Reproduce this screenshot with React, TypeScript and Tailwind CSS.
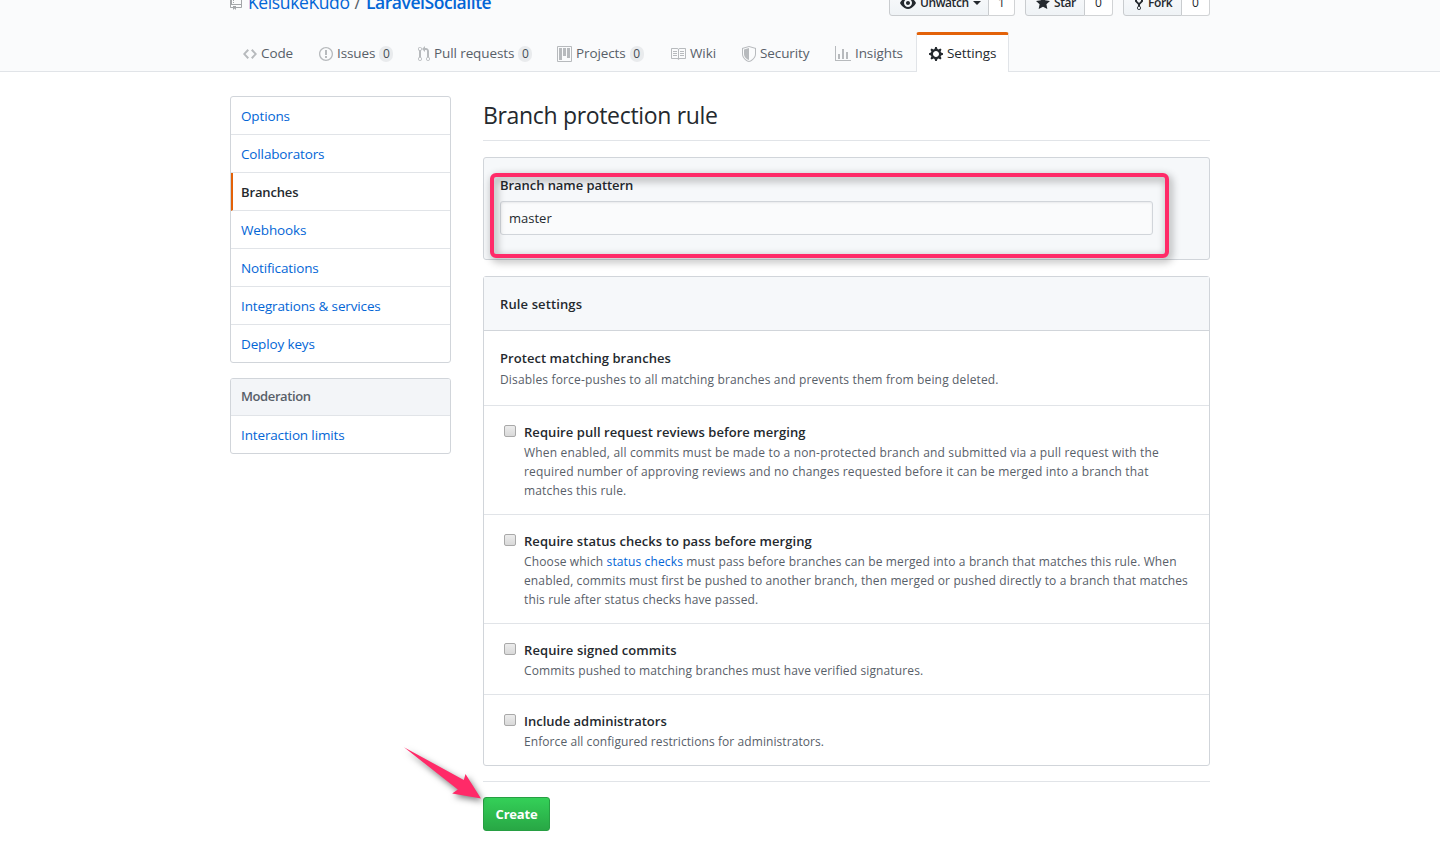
import React from "react";

type IconProps = {
  name: keyof typeof icons;
  className?: string;
};

const icons = {
  repo: {
    width: 12,
    path: "M4 9H3V8h1v1zm0-3H3v1h1V6zm0-2H3v1h1V4zm0-2H3v1h1V2zm8-1v12c0 .55-.45 1-1 1H6v2l-1.5-1.5L3 16v-2H1c-.55 0-1-.45-1-1V1c0-.55.45-1 1-1h10c.55 0 1 .45 1 1zm-1 10H1v2h2v-1h3v1h5v-2zm0-10H2v9h9V1z",
  },
  eye: {
    width: 16,
    path: "M8.06 2C3 2 0 8 0 8s3 6 8.06 6C13 14 16 8 16 8s-3-6-7.94-6zM8 12c-2.2 0-4-1.78-4-4 0-2.2 1.8-4 4-4 2.22 0 4 1.8 4 4 0 2.22-1.78 4-4 4zm2-4c0 1.11-.89 2-2 2-1.11 0-2-.89-2-2 0-1.11.89-2 2-2 1.11 0 2 .89 2 2z",
  },
  star: {
    width: 14,
    path: "M14 6l-4.9-.64L7 1 4.9 5.36 0 6l3.6 3.26L2.67 14 7 11.67 11.33 14l-.93-4.74L14 6z",
  },
  fork: {
    width: 10,
    path: "M8 1a1.993 1.993 0 0 0-1 3.72V6L5 8 3 6V4.72A1.993 1.993 0 0 0 2 1a1.993 1.993 0 0 0-1 3.72V6.5l3 3v1.78A1.993 1.993 0 0 0 5 15a1.993 1.993 0 0 0 1-3.72V9.5l3-3V4.72A1.993 1.993 0 0 0 8 1zM2 4.2C1.34 4.2.8 3.65.8 3c0-.65.55-1.2 1.2-1.2.65 0 1.2.55 1.2 1.2 0 .65-.55 1.2-1.2 1.2zm3 10c-.66 0-1.2-.55-1.2-1.2 0-.65.55-1.2 1.2-1.2.65 0 1.2.55 1.2 1.2 0 .65-.55 1.2-1.2 1.2zm3-10c-.66 0-1.2-.55-1.2-1.2 0-.65.55-1.2 1.2-1.2.65 0 1.2.55 1.2 1.2 0 .65-.55 1.2-1.2 1.2z",
  },
  code: {
    width: 14,
    path: "M9.5 3L8 4.5 11.5 8 8 11.5 9.5 13 14 8 9.5 3zm-5 0L0 8l4.5 5L6 11.5 2.5 8 6 4.5 4.5 3z",
  },
  issue: {
    width: 14,
    path: "M7 2.3c3.14 0 5.7 2.56 5.7 5.7s-2.56 5.7-5.7 5.7A5.71 5.71 0 0 1 1.3 8c0-3.14 2.56-5.7 5.7-5.7zM7 1C3.14 1 0 4.14 0 8s3.14 7 7 7 7-3.14 7-7-3.14-7-7-7zm1 3H6v5h2V4zm0 6H6v2h2v-2z",
  },
  pull: {
    width: 12,
    path: "M11 11.28V5c-.03-.78-.34-1.47-.94-2.06C9.46 2.35 8.78 2.03 8 2H7V0L4 3l3 3V4h1c.27.02.48.11.69.31.21.2.3.42.31.69v6.28A1.993 1.993 0 0 0 10 15a1.993 1.993 0 0 0 1-3.72zm-1 2.92c-.66 0-1.2-.55-1.2-1.2 0-.65.55-1.2 1.2-1.2.65 0 1.2.55 1.2 1.2 0 .65-.55 1.2-1.2 1.2zM4 3c0-1.11-.89-2-2-2a1.993 1.993 0 0 0-1 3.72v6.56A1.993 1.993 0 0 0 2 15a1.993 1.993 0 0 0 1-3.72V4.72c.59-.34 1-.98 1-1.72zm-.8 10c0 .66-.55 1.2-1.2 1.2-.65 0-1.2-.55-1.2-1.2 0-.65.55-1.2 1.2-1.2.65 0 1.2.55 1.2 1.2zM2 4.2C1.34 4.2.8 3.65.8 3c0-.65.55-1.2 1.2-1.2.65 0 1.2.55 1.2 1.2 0 .65-.55 1.2-1.2 1.2z",
  },
  project: {
    width: 15,
    path: "M10 12h3V2h-3v10zm-4-2h3V2H6v8zm-4 4h3V2H2v12zm-1 1h13V1H1v14zM14 0H1a1 1 0 0 0-1 1v14a1 1 0 0 0 1 1h13a1 1 0 0 0 1-1V1a1 1 0 0 0-1-1z",
  },
  book: {
    width: 16,
    path: "M3 5h4v1H3V5zm0 3h4V7H3v1zm0 2h4V9H3v1zm11-5h-4v1h4V5zm0 2h-4v1h4V7zm0 2h-4v1h4V9zm2-6v9c0 .55-.45 1-1 1H9.5l-1 1-1-1H2c-.55 0-1-.45-1-1V3c0-.55.45-1 1-1h5.5l1 1 1-1H15c.55 0 1 .45 1 1zm-8 .5L7.5 3H2v9h6V3.5zm7-.5H9.5l-.5.5V12h6V3z",
  },
  shield: {
    width: 14,
    path: "M0 2l7-2 7 2v6.02C14 12.69 8.69 16 7 16c-1.69 0-7-3.31-7-7.98V2zm1 .75L7 1l6 1.75v5.268C13 12.104 8.449 15 7 15c-1.449 0-6-2.896-6-6.982V2.75zm1 .75L7 2v12c-1.207 0-5-2.482-5-5.985V3.5z",
  },
  graph: {
    width: 16,
    path: "M16 14v1H0V0h1v14h15zM5 13H3V8h2v5zm4 0H7V3h2v10zm4 0h-2V6h2v7z",
  },
  gear: {
    width: 14,
    path: "M14 8.77v-1.6l-1.94-.64-.45-1.09.88-1.84-1.13-1.13-1.81.91-1.09-.45-.69-1.92h-1.6l-.63 1.94-1.11.45-1.84-.88-1.13 1.13.91 1.81-.45 1.09L0 7.23v1.59l1.94.64.45 1.09-.88 1.84 1.13 1.13 1.81-.91 1.09.45.69 1.92h1.59l.63-1.94 1.11-.45 1.84.88 1.13-1.13-.92-1.81.47-1.09L14 8.75v.02zM7 11c-1.66 0-3-1.34-3-3s1.34-3 3-3 3 1.34 3 3-1.34 3-3 3z",
  },
};

const Icon: React.FC<IconProps> = ({ name, className }) => (
  <svg
    width={icons[name].width}
    height={16}
    viewBox={`0 0 ${icons[name].width} 16`}
    fill="currentColor"
    className={`shrink-0 ${className ?? ""}`}
  >
    <path fillRule="evenodd" d={icons[name].path} />
  </svg>
);

type Tab = {
  icon: keyof typeof icons;
  label: string;
  width: string;
  count?: number;
  active?: boolean;
};

const tabs: Tab[] = [
  { icon: "code", label: "Code", width: "w-[76px]" },
  { icon: "issue", label: "Issues", width: "w-[99px]", count: 0 },
  { icon: "pull", label: "Pull requests", width: "w-[139px]", count: 0 },
  { icon: "project", label: "Projects", width: "w-[113px]", count: 0 },
  { icon: "book", label: "Wiki", width: "w-[72px]" },
  { icon: "shield", label: "Security", width: "w-[93px]" },
  { icon: "graph", label: "Insights", width: "w-[94px]" },
  { icon: "gear", label: "Settings", width: "w-[93px]", active: true },
];

const menu = [
  "Options",
  "Collaborators",
  "Branches",
  "Webhooks",
  "Notifications",
  "Integrations & services",
  "Deploy keys",
];

const rules = [
  {
    title: "Require pull request reviews before merging",
    titleClass: "tracking-[0.06px]",
    textClass: "tracking-[0.165px]",
    lines: [
      "When enabled, all commits must be made to a non-protected branch and submitted via a pull request with the",
      "required number of approving reviews and no changes requested before it can be merged into a branch that",
      "matches this rule.",
    ],
  },
  {
    title: "Require status checks to pass before merging",
    titleClass: "tracking-[0.07px]",
    textClass: "tracking-[0.13px]",
    lines: [
      <>
        Choose which <a className="text-[#0366d6]">status checks</a> must pass before branches can be merged into a branch that matches this rule. When
      </>,
      "enabled, commits must first be pushed to another branch, then merged or pushed directly to a branch that matches",
      "this rule after status checks have passed.",
    ],
  },
  {
    title: "Require signed commits",
    titleClass: "tracking-[0.08px]",
    textClass: "tracking-[0.13px]",
    lines: ["Commits pushed to matching branches must have verified signatures."],
  },
  {
    title: "Include administrators",
    titleClass: "tracking-normal",
    textClass: "tracking-[0.08px]",
    lines: ["Enforce all configured restrictions for administrators."],
  },
];

type SocialProps = {
  icon: keyof typeof icons;
  label: string;
  count: number;
  width: string;
  countWidth: string;
  caret?: boolean;
};

const SocialButton: React.FC<SocialProps> = ({ icon, label, count, width, countWidth, caret }) => (
  <div className="flex h-7 text-xs font-semibold text-[#24292e]">
    <button
      className={`${width} flex items-center gap-1 rounded-l-[3px] border border-[#c9cccf] bg-gradient-to-b from-[#fafbfc] to-[#eff3f6] pt-px pl-[10px] tracking-[-0.42px]`}
    >
      <Icon name={icon} />
      {label}
      {caret && <span className="border-x-4 border-t-4 border-x-transparent border-t-[#24292e]" />}
    </button>
    <span
      className={`${countWidth} flex items-center justify-center rounded-r-[3px] border border-l-0 border-[#d1d3d5] bg-white pt-px font-medium`}
    >
      {count}
    </span>
  </div>
);

const Header = () => (
  <div className="h-[72px] overflow-hidden bg-[#fafbfc] shadow-[inset_0_-1px_0_#e1e4e8]">
    <div className="mx-auto -mt-3 flex h-11 w-[980px] items-start justify-between">
      <div className="flex h-7 items-center text-[17.5px] text-[#0366d6]">
        <Icon name="repo" className="mr-[6px] text-[#a3a6a9]" />
        <a className="tracking-[-0.38px]">KeisukeKudo</a>
        <span className="mx-[5px] text-[#586069]">/</span>
        <a className="font-semibold tracking-[-0.45px]">LaravelSocialite</a>
      </div>
      <div className="flex gap-[10px]">
        <SocialButton icon="eye" label="Unwatch" count={1} width="w-[100px]" countWidth="w-[26px]" caret />
        <SocialButton icon="star" label="Star" count={0} width="w-[60px]" countWidth="w-[28px]" />
        <SocialButton icon="fork" label="Fork" count={0} width="w-[59px]" countWidth="w-[28px]" />
      </div>
    </div>
    <nav className="mx-auto flex h-10 w-[980px] text-[13.5px] tracking-[-0.1px]">
      {tabs.map((t) => (
        <a
          key={t.label}
          className={`${t.width} flex items-center gap-1 rounded-t-[3px] border-x border-t-[3px] pl-3 whitespace-nowrap ${
            t.active
              ? "border-x-[#e1e4e8] border-t-[#e36209] bg-white text-[#24292e]"
              : "border-transparent text-[#586069]"
          }`}
        >
          <Icon name={t.icon} className={t.active ? "" : "text-[#b7babd]"} />
          <span className="-mt-px">{t.label}</span>
          {t.count !== undefined && (
            <span className="flex h-4 w-[14px] items-center justify-center rounded-full bg-[#e9ebed] text-xs font-medium tracking-normal text-[#444d56]">
              {t.count}
            </span>
          )}
        </a>
      ))}
    </nav>
  </div>
);

const Sidebar = () => (
  <aside className="flex w-[221px] shrink-0 flex-col gap-[15px] text-[13.5px] tracking-[-0.14px]">
    <div className="overflow-hidden rounded-[3px] border border-[#d1d5da] bg-white">
      {menu.map((item) => (
        <a
          key={item}
          className={`flex h-[38px] items-center border-b border-[#e1e4e8] pt-0.5 last:h-[37px] last:border-b-0 ${
            item === "Branches"
              ? "border-l-2 border-l-[#e36209] pl-2 text-[13px] font-semibold text-[#24292e]"
              : "pl-[10px] text-[#0366d6]"
          }`}
        >
          {item}
        </a>
      ))}
    </div>
    <div className="overflow-hidden rounded-[3px] border border-[#d1d5da] bg-white">
      <div className="flex h-[37px] items-center border-b border-[#e1e4e8] bg-[#f3f5f8] pl-[10px] text-[13px] font-semibold tracking-[-0.4px] text-[#586069]">
        Moderation
      </div>
      <a className="flex h-[37px] items-center pt-px pl-[10px] text-[#0366d6]">Interaction limits</a>
    </div>
  </aside>
);

const App: React.FC = () => {
  return (
    <div className="h-[860px] overflow-hidden bg-white font-['Open_Sans','Noto_Sans',sans-serif] text-[#24292e]">
      <Header />
      <div className="mx-auto flex w-[980px] gap-8 pt-6">
        <Sidebar />
        <main className="w-[727px]">
          <h2 className="flex h-[45px] items-center border-b border-[#e1e4e8] pb-[5px] text-[23px] tracking-[-0.33px]">
            Branch protection rule
          </h2>

          <div className="relative mt-4 h-[103px] rounded-[3px] border border-[#d1d5da] bg-[#f6f8fa] px-4 pt-[17px]">
            <label className="block h-5 text-[13px] leading-5 font-semibold tracking-[-0.06px]">Branch name pattern</label>
            <input
              defaultValue="master"
              className="mt-[6px] block h-[34px] w-[653px] rounded-[3px] border border-[#d1d5da] bg-[#fafbfc] px-2 text-[13px] shadow-[inset_0_1px_2px_rgba(27,31,35,0.075)] outline-none"
            />
            {/* pink marker around the pattern field */}
            <div className="pointer-events-none absolute top-[15px] left-[5.5px] h-[84.5px] w-[679px] rounded-[6px] border-4 border-[#ff2a68] drop-shadow-[2px_3px_4px_rgba(0,0,0,0.45)]" />
          </div>

          <div className="mt-4 rounded-[3px] border border-[#d1d5da]">
            <div className="flex h-[54px] items-center border-b border-[#d1d5da] bg-[#f6f8fa] px-4 pt-0.5 text-[13px] font-semibold tracking-[0.12px]">
              Rule settings
            </div>
            <div className="h-[75px] border-b border-[#e1e4e8] px-4 pt-[17px]">
              <h3 className="text-[13px] leading-5 font-semibold tracking-[0.06px]">Protect matching branches</h3>
              <p className="mt-[2px] text-xs leading-[19px] tracking-[0.155px] text-[#586069]">
                Disables force-pushes to all matching branches and prevents them from being deleted.
              </p>
            </div>
            {rules.map((rule) => (
              <div key={rule.title} className="flex border-b border-[#e1e4e8] px-5 pt-4 pb-[14px] last:border-b-0">
                <span className="mt-[3px] mr-2 h-3 w-3 shrink-0 rounded-[2px] border border-[#a9a9a9] bg-gradient-to-b from-[#ececec] to-[#d9d9d9]" />
                <div>
                  <h3 className={`text-[13px] leading-[21px] font-semibold ${rule.titleClass}`}>{rule.title}</h3>
                  <div className={`text-xs leading-[19px] whitespace-nowrap text-[#586069] ${rule.textClass}`}>
                    {rule.lines.map((line, i) => (
                      <p key={i}>{line}</p>
                    ))}
                  </div>
                </div>
              </div>
            ))}
          </div>

          <div className="relative mt-[15px] border-t border-[#e1e4e8] pt-[15px]">
            <button className="h-[34px] w-[67px] rounded-[3px] border border-[#279f43] bg-gradient-to-b from-[#34d058] to-[#28a745] pt-px text-[13px] font-bold tracking-[-0.2px] text-white">
              Create
            </button>
            <svg
              className="pointer-events-none absolute -top-[42px] -left-[84px] drop-shadow-[2px_3px_3px_rgba(0,0,0,0.5)]"
              width="90"
              height="64"
              viewBox="400 740 90 64"
            >
              <path d="M405 747.2L464.8 780L466.5 774L482 798.6L453.2 793.6L458.8 789.6Z" fill="#ff2a68" />
            </svg>
          </div>
        </main>
      </div>
    </div>
  );
};

export default App;
